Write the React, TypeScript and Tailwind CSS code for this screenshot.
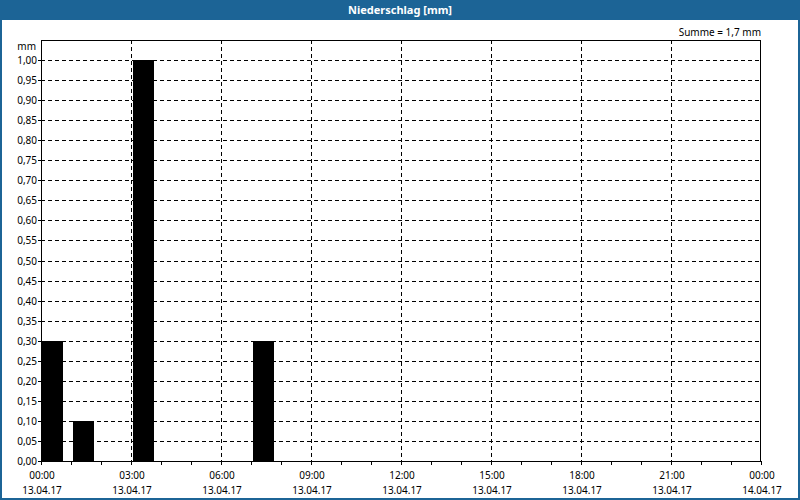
import React from "react";

const L = 41, R = 760, T = 40, B = 461;
const yv = (v: number) => B - v * 401;
const xh = (h: number) => L + h * 30;

export default function App() {
  const ys = Array.from({ length: 21 }, (_, i) => i * 0.05);
  const xs = Array.from({ length: 9 }, (_, i) => i * 3);
  const labels = ["00:00","03:00","06:00","09:00","12:00","15:00","18:00","21:00","00:00"];
  const dates = ["13.04.17","13.04.17","13.04.17","13.04.17","13.04.17","13.04.17","13.04.17","13.04.17","14.04.17"];
  const bars = [[41, 22, 0.3], [73, 21, 0.1], [133, 21, 1.0], [253, 21, 0.3]];
  return (
    <div className="w-[800px] h-[500px] bg-[#1c6496] flex flex-col font-['DejaVu_Sans',sans-serif]">
      <div className="h-[20px] flex items-center justify-center text-white text-[11px] font-bold">Niederschlag [mm]</div>
      <div className="mx-[2px] mb-[2px] flex-1 bg-white">
        <svg width="796" height="478" viewBox="2 20 796 478" shapeRendering="crispEdges" className="text-[10px] block">
          {ys.slice(1).map((v) => (
            <line key={v} x1={L} x2={R} y1={Math.round(yv(v)) + 0.5} y2={Math.round(yv(v)) + 0.5} stroke="#000" strokeDasharray="4 3" />
          ))}
          {xs.slice(1, 8).map((h) => (
            <line key={h} x1={xh(h) + 0.5} x2={xh(h) + 0.5} y1={T} y2={B} stroke="#000" strokeDasharray="4 3" />
          ))}
          {bars.map(([x, w, v], i) => (
            <rect key={i} x={x} y={Math.round(yv(v))} width={w} height={B - Math.round(yv(v))} fill="#000" />
          ))}
          <rect x={L + 0.5} y={T + 0.5} width={R - L} height={B - T} fill="none" stroke="#000" />
          {Array.from({ length: 25 }, (_, i) => (
            <line key={i} x1={xh(i) + 0.5} x2={xh(i) + 0.5} y1={B} y2={B + 4} stroke="#000" />
          ))}
          {ys.map((v) => (
            <line key={"t" + v} x1={L - 3} x2={L} y1={Math.round(yv(v)) + 0.5} y2={Math.round(yv(v)) + 0.5} stroke="#000" />
          ))}
          <text x={36} y={50} textAnchor="end" fill="#000">mm</text>
          {ys.map((v) => (
            <text key={"l" + v} x={37} y={Math.round(yv(v)) + 4} textAnchor="end" fill="#000">{v.toFixed(2).replace(".", ",")}</text>
          ))}
          {xs.map((h, i) => (
            <g key={"x" + h}>
              <text x={xh(h) + 1} y={479} textAnchor="middle" fill="#000">{labels[i]}</text>
              <text x={xh(h) + 1} y={494} textAnchor="middle" fill="#000">{dates[i]}</text>
            </g>
          ))}
          <text x={761} y={36} textAnchor="end" fill="#000">Summe = 1,7 mm</text>
        </svg>
      </div>
    </div>
  );
}
